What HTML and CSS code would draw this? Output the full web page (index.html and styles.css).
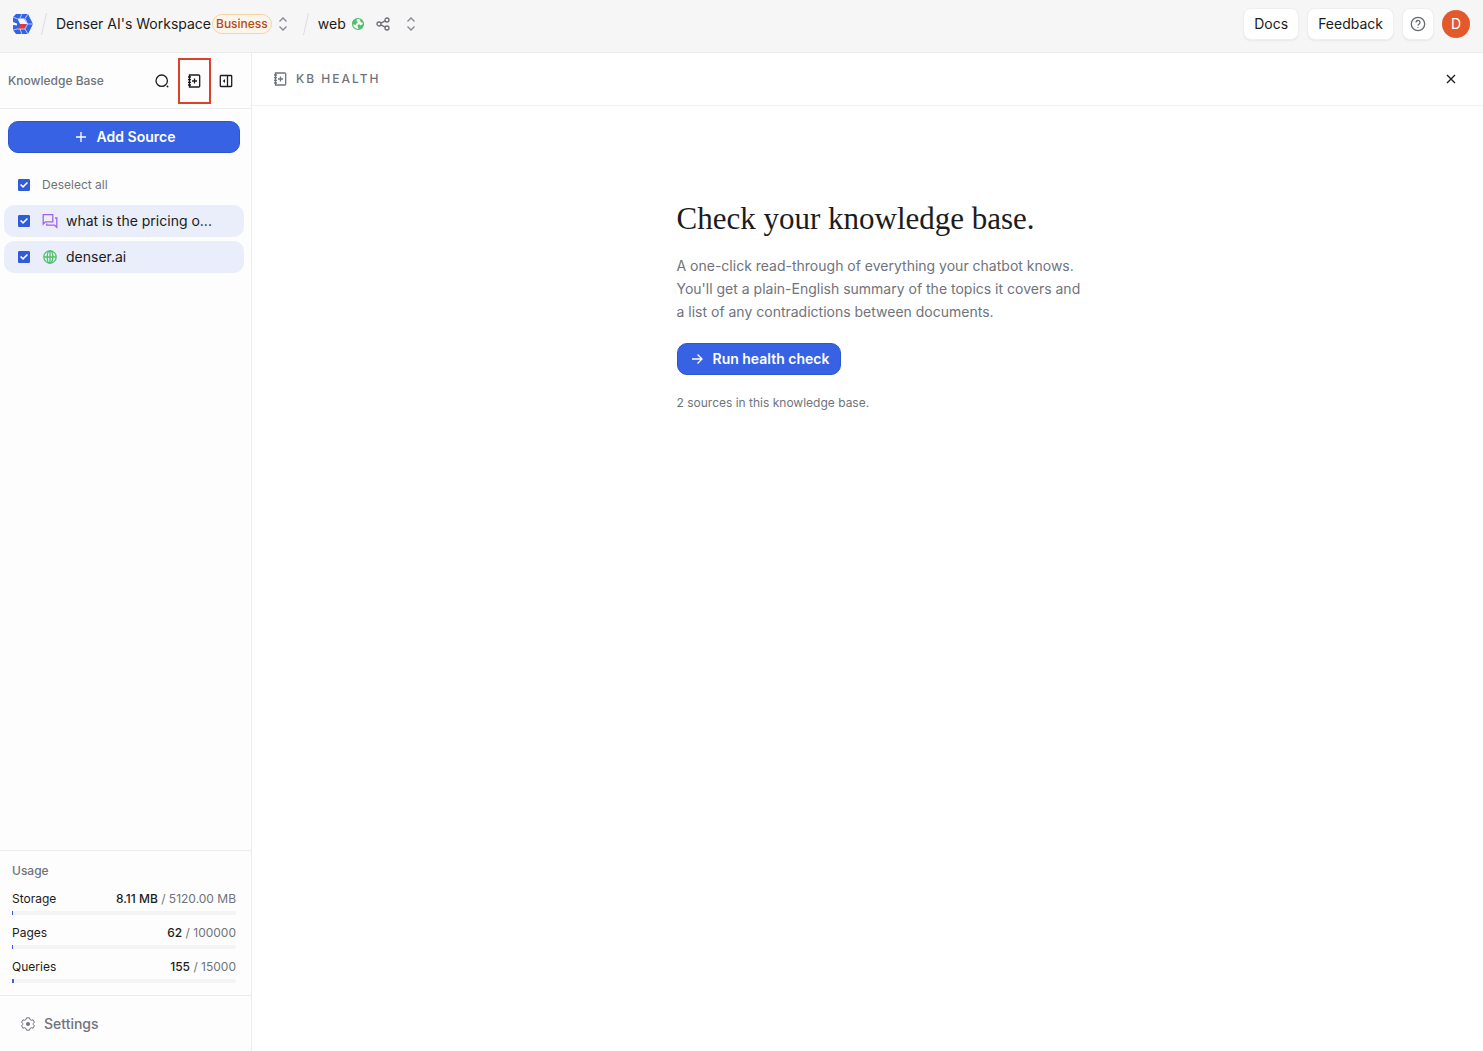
FILE: index.html
```html
<!DOCTYPE html>
<html lang="en">

<head>
    <meta charset="UTF-8">
    <meta name="viewport" content="width=device-width, initial-scale=1.0">
    <title>KB Health</title>
    <link rel="stylesheet" href="styles.css">
</head>

<body>
    <header class="topbar">
        <a href="#" class="logo" aria-label="Home">
            <svg width="22" height="22" viewBox="0 0 22 22">
                <path fill="#3262e6" d="M4 1H16l5 10-5 10H4L1 17v-5l4 .5v-2L1 9V4z" />
                <path fill="#f6f6f6" d="M5.500 5.500H12l3.500 5.500H8z" />
                <path fill="#dc3a3f" d="M8.300 11h6.200L12.500 15.800H5.800z" />
                <path class="seams" d="M1 4l4.500 2M13 5.500L16 1M9.800 1L8 5.500M13 5.500l2.500 5.500H21M15.500 11L13 16H5.500L1 17M8 16l1.800 5M13 16l3 5" />
            </svg>
        </a>
        <svg class="slash" width="8" height="24" viewBox="0 0 8 24"><path d="M6.500 1L1.500 23" /></svg>
        <a href="#" class="crumb workspace">Denser AI's Workspace</a>
        <span class="badge">Business</span>
        <button class="switcher" aria-label="Switch workspace">
            <svg class="icon" width="16" height="16" viewBox="0 0 16 16"><path d="M4.500 5.500L8 2l3.500 3.500M4.500 10.500L8 14l3.500-3.500" /></svg>
        </button>
        <svg class="slash" width="8" height="24" viewBox="0 0 8 24"><path d="M6.500 1L1.500 23" /></svg>
        <a href="#" class="crumb project">web</a>
        <svg class="globe" width="14" height="14" viewBox="0 0 14 14">
            <circle cx="7" cy="7" r="5.500" />
            <path class="land" d="M1.500 5L3 2.500l3-1-.5 2.500L7 5.200 5.500 6.500 4.500 8l-3-1zM6.500 8l1.700-.8L9.500 8.500l2.500-1.500.3 1.500-1.800 3L8 12.500 7 10.500zM9 2l2 1.200 1.200 2.300-1.700.3L9.300 4.300z" />
        </svg>
        <button class="share" aria-label="Share">
            <svg class="icon" width="14" height="14" viewBox="0 0 14 14">
                <circle cx="3" cy="7" r="2" />
                <circle cx="11" cy="3" r="2" />
                <circle cx="11" cy="11" r="2" />
                <path d="M4.800 6.100l4.400-2.200M4.800 7.900l4.400 2.200" />
            </svg>
        </button>
        <button class="switcher" aria-label="Switch project">
            <svg class="icon" width="16" height="16" viewBox="0 0 16 16"><path d="M4.500 5.500L8 2l3.500 3.500M4.500 10.500L8 14l3.500-3.500" /></svg>
        </button>
        <div class="actions">
            <a href="#" class="pill">Docs</a>
            <button class="pill">Feedback</button>
            <button class="pill help" aria-label="Help">
                <svg class="icon" width="16" height="16" viewBox="0 0 16 16">
                    <circle cx="8" cy="8" r="6.700" />
                    <path d="M6 6.500a2 2 0 1 1 3 1.700c-.7.400-1 .7-1 1.300M8 11.200v.8" />
                </svg>
            </button>
            <button class="avatar" aria-label="Account">D</button>
        </div>
    </header>

    <div class="layout">
        <aside class="sidebar">
            <div class="sidebar-head">
                <h2>Knowledge Base</h2>
                <button class="tool" aria-label="Search">
                    <svg class="icon" width="16" height="16" viewBox="0 0 16 16"><circle cx="7.700" cy="7.700" r="5.700" /><path d="M12.800 12.800l1.400 1.400" /></svg>
                </button>
                <button class="tool marked" aria-label="KB health">
                    <svg class="icon" width="16" height="16" viewBox="0 0 16 16">
                        <path d="M3.500 2h9.200q1 0 1 1v10q0 1-1 1H3.500zM8.500 5.500v5M6 8h5M2 4h3M2 6.600h3M2 9.300h3M2 12h3" />
                    </svg>
                </button>
                <button class="tool" aria-label="Collapse sidebar">
                    <svg class="icon" width="16" height="16" viewBox="0 0 16 16">
                        <path d="M3 2.500h10q.7 0 .7.700v9.600q0 .7-.7.700H3q-.7 0-.7-.7V3.200q0-.7.7-.7zM9.500 2.500v11" />
                        <path class="solid" d="M7 6v4L4.800 8z" />
                    </svg>
                </button>
            </div>

            <div class="sources">
                <button class="primary add">
                    <svg class="icon" width="16" height="16" viewBox="0 0 16 16"><path d="M8 3v10M3 8h10" /></svg>
                    Add Source
                </button>
                <label class="select-all">
                    <input type="checkbox" checked>
                    Deselect all
                </label>
                <ul class="source-list">
                    <li>
                        <label class="source">
                            <input type="checkbox" checked>
                            <svg class="chat" width="16" height="16" viewBox="0 0 16 16"><path d="M1.200 1.700h9.600v7.100H3.500l-2.300 2.300zM13 5h1.800v9.300l-2.300-2.100H4.800v-1.700" /></svg>
                            <span>what is the pricing o...</span>
                        </label>
                    </li>
                    <li>
                        <label class="source">
                            <input type="checkbox" checked>
                            <svg class="web" width="16" height="16" viewBox="0 0 16 16"><circle cx="8" cy="8" r="6.200" /><ellipse cx="8" cy="8" rx="2.800" ry="6.200" /><path d="M2 8h12M8 2v12" /></svg>
                            <span>denser.ai</span>
                        </label>
                    </li>
                </ul>
            </div>

            <section class="usage">
                <h3>Usage</h3>
                <div class="meter">
                    <span>Storage</span>
                    <span class="amount"><b>8.11 MB</b> / 5120.00 MB</span>
                    <div class="track"><div class="fill" style="width: 0.16%"></div></div>
                </div>
                <div class="meter">
                    <span>Pages</span>
                    <span class="amount"><b>62</b> / 100000</span>
                    <div class="track"><div class="fill" style="width: 0.06%"></div></div>
                </div>
                <div class="meter">
                    <span>Queries</span>
                    <span class="amount"><b>155</b> / 15000</span>
                    <div class="track"><div class="fill" style="width: 1.03%"></div></div>
                </div>
            </section>

            <a href="#" class="settings">
                <svg class="icon gear" width="16" height="16" viewBox="0 0 16 16">
                    <path d="M6.600 1.800h2.800l.6 1.700 1.300.7 1.800-.3 1.300 2.300-1.100 1.300v1l1.100 1.300-1.300 2.300-1.800-.3-1.300.7-.6 1.700H6.600L6 12.500l-1.300-.7-1.800.3-1.300-2.300 1.100-1.300v-1L1.600 6.200l1.300-2.300 1.800.3L6 3.500z" />
                    <circle class="solid" cx="8" cy="8" r="2" />
                </svg>
                Settings
            </a>
        </aside>

        <main class="content">
            <div class="content-head">
                <svg class="icon" width="16" height="16" viewBox="0 0 16 16">
                    <path d="M3.500 2h9.200q1 0 1 1v10q0 1-1 1H3.500zM8.500 5.500v5M6 8h5M2 4h3M2 6.600h3M2 9.300h3M2 12h3" />
                </svg>
                <h1>KB HEALTH</h1>
                <button class="close" aria-label="Close">
                    <svg class="icon" width="16" height="16" viewBox="0 0 16 16"><path d="M4 4l8 8M12 4l-8 8" /></svg>
                </button>
            </div>
            <section class="intro">
                <h2>Check your knowledge base.</h2>
                <p>A one-click read-through of everything your chatbot knows. You'll get a plain-English summary of the topics it covers and a list of any contradictions between documents.</p>
                <button class="primary">
                    <svg class="icon" width="16" height="16" viewBox="0 0 16 16"><path d="M3 8h10M8.500 3.500L13 8l-4.500 4.500" /></svg>
                    Run health check
                </button>
                <p class="note">2 sources in this knowledge base.</p>
            </section>
        </main>
    </div>
</body>

</html>
```
FILE: styles.css
```css
* {
    box-sizing: border-box;
}

body {
    margin: 0;
    min-height: 100vh;
    display: flex;
    flex-direction: column;
    font-family: Inter, "Liberation Sans", sans-serif;
    font-size: 14px;
    line-height: 20px;
    color: #1b1c20;
    background-color: #fefefe;
}

h1, h2, h3, p, ul {
    margin: 0;
    padding: 0;
}

ul {
    list-style: none;
}

a {
    color: inherit;
    text-decoration: none;
}

button {
    font: inherit;
    color: inherit;
    padding: 0;
    border: none;
    background: none;
    cursor: pointer;
}

svg {
    display: block;
    flex-shrink: 0;
}

.icon {
    fill: none;
    stroke: currentColor;
    stroke-width: 1.3;
}

.solid {
    fill: currentColor;
    stroke: none;
}

/* top bar */
.topbar {
    display: flex;
    align-items: center;
    height: 53px;
    padding: 0 13px 4px 12px;
    background-color: #f6f6f6;
    border-bottom: 1px solid #ebecee;
}

.logo {
    margin-right: 6px;
}

.seams {
    fill: none;
    stroke: #f6f6f6;
    stroke-width: 0.7;
}

.slash {
    fill: none;
    stroke: #dcdddf;
}

.workspace {
    margin-left: 8px;
}

.badge {
    margin: 0 3px 0 1px;
    padding: 0 3px;
    border: 1px solid #f8d3a2;
    border-radius: 10px;
    background-color: #fef5ea;
    color: #b84a18;
    font-size: 12px;
    line-height: 18px;
    font-weight: 500;
}

.switcher {
    color: #85888e;
}

.switcher + .slash {
    margin-left: 11px;
}

.project {
    margin: 0 5px 0 8px;
}

.globe {
    fill: none;
    stroke: #4fc16a;
    stroke-width: 1.2;
}

.globe .land {
    fill: #4fc16a;
    stroke: none;
}

.share {
    margin: 0 13px 0 11px;
    color: #6a6d75;
}

.actions {
    display: flex;
    align-items: center;
    gap: 8px;
    margin-left: auto;
}

.pill {
    height: 32px;
    padding: 5px 10px;
    border: 1px solid #efeff0;
    border-radius: 8px;
    background-color: #fff;
    box-shadow: 0 1px 2px rgba(0, 0, 0, 0.06);
}

.help {
    padding: 0 7px;
    color: #666970;
}

.avatar {
    width: 28px;
    height: 28px;
    border-radius: 50%;
    background-color: #e25a2c;
    color: #fff;
}

.layout {
    flex: 1;
    display: flex;
}

/* sidebar */
.sidebar {
    width: 252px;
    flex-shrink: 0;
    display: flex;
    flex-direction: column;
    border-right: 1px solid #ebecee;
    background-color: #fdfdfd;
}

.sidebar-head {
    display: flex;
    align-items: center;
    height: 56px;
    padding: 0 9px 0 8px;
    border-bottom: 1px solid #ebecee;
}

.sidebar-head h2 {
    flex: 1;
    font-size: 12px;
    font-weight: 500;
    color: #6f737c;
}

.tool {
    position: relative;
    display: grid;
    place-items: center;
    width: 32px;
    height: 32px;
}

/* frame drawn round the highlighted tool */
.marked::after {
    content: "";
    position: absolute;
    inset: -7px -1px -7px 0;
    border: 2px solid #d8432c;
}

.sources {
    flex: 1;
    padding: 12px 7px 12px 4px;
}

.primary {
    display: flex;
    align-items: center;
    justify-content: center;
    gap: 8px;
    height: 32px;
    padding: 0 11px;
    border: 1px solid #2d55d0;
    border-radius: 10px;
    background-color: #3762e3;
    color: #fff;
    font-weight: 600;
}

.add {
    width: 232px;
    margin: 0 4px 18px;
}

.select-all,
.source {
    display: flex;
    align-items: center;
    cursor: pointer;
}

.select-all {
    gap: 12px;
    height: 28px;
    margin-bottom: 6px;
    padding-left: 14px;
    font-size: 12px;
    color: #6f737c;
}

.source-list {
    display: grid;
    gap: 4px;
}

.source {
    height: 32px;
    padding-left: 14px;
    border-radius: 10px;
    background-color: #e9eefa;
}

.source svg {
    margin: 0 8px 0 12px;
}

.chat,
.web {
    fill: none;
    stroke-width: 1.3;
}

.chat {
    stroke: #a263e8;
}

.web {
    stroke: #4fc16a;
}

input[type="checkbox"] {
    appearance: none;
    display: grid;
    place-items: center;
    width: 12px;
    height: 12px;
    margin: 0;
    border-radius: 1px;
    border: 1px solid #315bd9;
}

input[type="checkbox"]:checked {
    background-color: #315bd9;
}

input[type="checkbox"]:checked::before {
    content: "";
    width: 8px;
    height: 8px;
    background-color: #fff;
    clip-path: polygon(0 50%, 14% 36%, 38% 60%, 86% 12%, 100% 26%, 38% 88%);
}

/* usage */
.usage {
    padding: 10px 15px 12px 12px;
    border-top: 1px solid #ebecee;
    font-size: 12px;
}

.usage h3 {
    margin-bottom: 8px;
    font-size: 12px;
    font-weight: 500;
    color: #6f737c;
}

.meter {
    display: flex;
    flex-wrap: wrap;
    justify-content: space-between;
    row-gap: 2px;
}

.meter + .meter {
    margin-top: 8px;
}

.amount {
    color: #6f737c;
}

.amount b {
    font-weight: 500;
    color: #1b1c20;
}

.track {
    width: 100%;
    height: 4px;
    border-radius: 2px;
    background-color: #f4f4f5;
}

.fill {
    min-width: 1px;
    height: 4px;
    background-color: #3762e3;
}

.settings {
    display: flex;
    align-items: center;
    gap: 8px;
    height: 56px;
    padding-left: 20px;
    border-top: 1px solid #ebecee;
    font-weight: 500;
    color: #6f737c;
}

.gear {
    stroke-width: 1;
}

/* main panel */
.content {
    flex: 1;
    background-color: #fff;
}

.content-head {
    display: flex;
    align-items: center;
    gap: 8px;
    height: 53px;
    padding: 0 24px 0 20px;
    border-bottom: 1px solid #f1f1f2;
    color: #6f737c;
}

.content-head h1 {
    font-size: 12px;
    font-weight: 500;
    letter-spacing: 2px;
}

.close {
    margin-left: auto;
    color: #1b1c20;
}

.intro {
    max-width: 440px;
    margin: 0 auto;
    padding: 93px 0 40px 29px;
}

.intro h2 {
    font-family: "Liberation Serif", serif;
    font-size: 31px;
    line-height: 40px;
    font-weight: 400;
}

.intro p {
    margin: 15px 0 20px;
    line-height: 23px;
    color: #6f737c;
}

.intro .note {
    margin: 18px 0 0;
    font-size: 12px;
    line-height: 20px;
}
```
